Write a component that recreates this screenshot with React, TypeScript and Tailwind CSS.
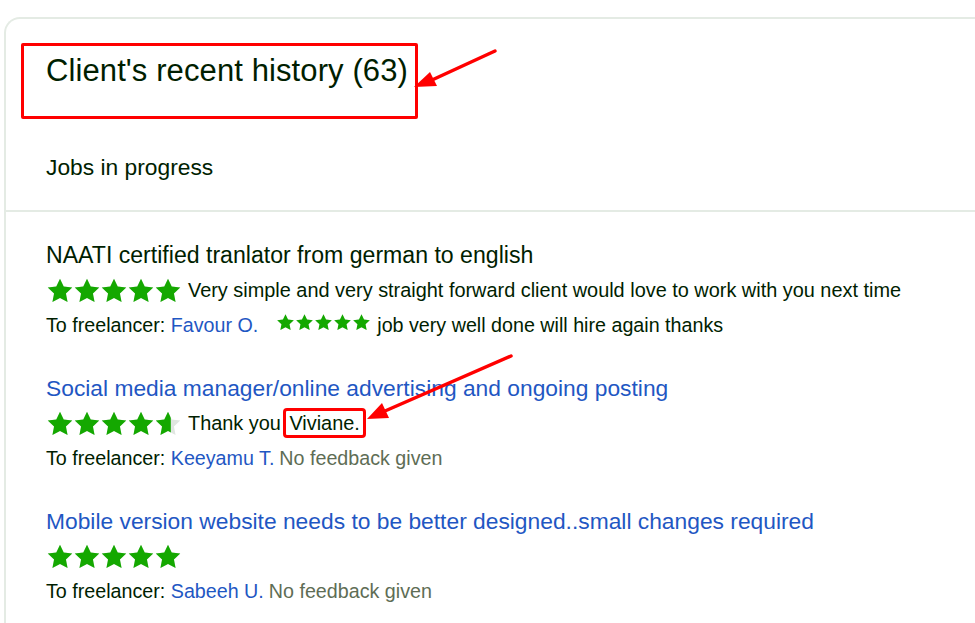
import React from 'react';

const GREEN = '#14a800';
const STAR_PATH =
  'M12 1.5l3.2 6.7 7.3.9-5.4 5.1 1.4 7.2L12 17.9l-6.5 3.5 1.4-7.2-5.4-5.1 7.3-.9z';

const Star = ({ size, fill = 1, id }: { size: number; fill?: number; id: string }) => (
  <svg width={size} height={size} viewBox="0 0 24 24" className="shrink-0">
    <defs>
      <clipPath id={id}>
        <rect x="0" y="0" width={24 * fill} height="24" />
      </clipPath>
    </defs>
    <path d={STAR_PATH} fill="#e0e6e0" />
    <path d={STAR_PATH} fill={GREEN} clipPath={`url(#${id})`} />
  </svg>
);

const Stars = ({ rating, size, gap, prefix }: { rating: number; size: number; gap: string; prefix: string }) => (
  <span className={`inline-flex items-center ${gap}`}>
    {[0, 1, 2, 3, 4].map((i) => (
      <Star key={i} size={size} id={`${prefix}-${i}`} fill={Math.max(0, Math.min(1, rating - i))} />
    ))}
  </span>
);

interface Job {
  title: string;
  isLink: boolean;
  rating: number;
  clientFeedback?: React.ReactNode;
  freelancer: string;
  freelancerRating?: number;
  freelancerFeedback?: string;
}

const jobs: Job[] = [
  {
    title: 'NAATI certified tranlator from german to english',
    isLink: false,
    rating: 5,
    clientFeedback: 'Very simple and very straight forward client would love to work with you next time',
    freelancer: 'Favour O.',
    freelancerRating: 5,
    freelancerFeedback: 'job very well done will hire again thanks',
  },
  {
    title: 'Social media manager/online advertising and ongoing posting',
    isLink: true,
    rating: 4.6,
    clientFeedback: (
      <>
        Thank you{' '}
        <span className="outline-[3px] outline-solid outline-[#f00] px-[3px] py-[1px] rounded-[1px]">Viviane.</span>
      </>
    ),
    freelancer: 'Keeyamu T.',
  },
  {
    title: 'Mobile version website needs to be better designed..small changes required',
    isLink: true,
    rating: 5,
    freelancer: 'Sabeeh U.',
  },
];

export default function App() {
  return (
    <div
      className="relative w-[975px] h-[623px] overflow-hidden bg-white text-[#001e00]"
      style={{ fontFamily: '"Liberation Sans", Arial, sans-serif' }}
    >
      <div className="ml-[4px] mt-[17px] w-[1000px] min-h-[640px] border-l-2 border-t-2 border-[#e4ebe4] rounded-tl-[16px]">
        {/* Header */}
        <div className="pl-[40px] pt-[32px] pb-[29px]">
          <h2 className="text-[31px] leading-[40px] tracking-[0.1px]">Client's recent history (63)</h2>
          <div className="mt-[62px] text-[22.8px] leading-[28px]">Jobs in progress</div>
        </div>
        <div className="border-t-2 border-[#e4ebe4]" />

        {/* Jobs */}
        <div className="pl-[40px] pt-[28px] flex flex-col gap-[32px]">
          {jobs.map((job, idx) => (
            <div key={idx} className="flex flex-col">
              <div
                className={`${idx === 0 ? 'text-[23.1px]' : 'text-[22.8px]'} leading-[30px] ${
                  job.isLink ? 'text-[#1f57c3]' : 'text-[#001e00]'
                }`}
              >
                {job.title}
              </div>
              <div className="mt-[6px] flex items-center gap-[6px] h-[30px] text-[19.9px]">
                <Stars rating={job.rating} size={28} gap="-space-x-[1px]" prefix={`c${idx}`} />
                {job.clientFeedback && <span>{job.clientFeedback}</span>}
              </div>
              <div className="mt-[5px] flex items-center h-[30px] text-[19.7px]">
                <span>To freelancer:&nbsp;</span>
                <span className="text-[#1f57c3]">{job.freelancer}</span>
                {job.freelancerRating ? (
                  <>
                    <span className="ml-[18px]">
                      <Stars rating={job.freelancerRating} size={19} gap="-space-x-[0px]" prefix={`f${idx}`} />
                    </span>
                    <span className="ml-[6px]">{job.freelancerFeedback}</span>
                  </>
                ) : (
                  <span className="ml-[5px] text-[#5e6d55]">No feedback given</span>
                )}
              </div>
            </div>
          ))}
        </div>
      </div>

      {/* Annotation: box around heading */}
      <div className="absolute left-[21px] top-[43px] w-[397px] h-[76px] border-[3px] border-[#f00] rounded-[2px]" />

      {/* Annotation arrows */}
      <svg className="absolute left-0 top-0 pointer-events-none" width="975" height="623">
        <line x1="495" y1="51" x2="432" y2="80" stroke="#f00" strokeWidth="3.5" strokeLinecap="round" />
        <polygon points="414,87 430,72 437,86" fill="#f00" />
        <line x1="511" y1="356" x2="385" y2="411" stroke="#f00" strokeWidth="3.5" strokeLinecap="round" />
        <polygon points="367,419 382,403 389,418" fill="#f00" />
      </svg>
    </div>
  );
}
